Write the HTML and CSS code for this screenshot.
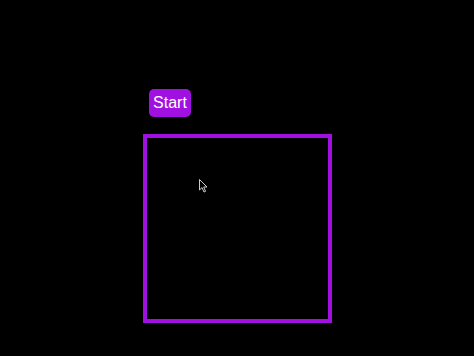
FILE: index.html
```html
<!DOCTYPE html>
<html>
<head>
<meta charset="utf-8">
<link rel="stylesheet" href="styles.css">
</head>
<body>
<div class="stage">
  <button class="start">Start</button>
  <div class="box"></div>
</div>
<svg class="cursor" width="10" height="14" viewBox="0 0 10 14"><path d="M0.5 0.5 L0.5 11 L3 8.6 L5 13 L6.6 12.3 L4.7 8 L8 8 Z" fill="#000" stroke="#ccc" stroke-width="1"/></svg>
</body>
</html>
```
FILE: styles.css
```css
html, body {
  margin: 0;
  padding: 0;
  background: #000;
  height: 100%;
}
.stage {
  display: flex;
  flex-direction: column;
  align-items: flex-start;
  padding: 89px 0 0 143px;
  gap: 17px;
}
.start {
  margin-left: 6px;
  width: 42px;
  height: 28px;
  padding: 0;
  border: none;
  border-radius: 5px;
  background: #a010e0;
  color: #fff;
  font-family: "Liberation Sans", Arial, sans-serif;
  font-size: 16px;
}
.box {
  width: 181px;
  height: 181px;
  border: 4px solid #a010e0;
}
.cursor {
  position: absolute;
  left: 199px;
  top: 179px;
}
```
